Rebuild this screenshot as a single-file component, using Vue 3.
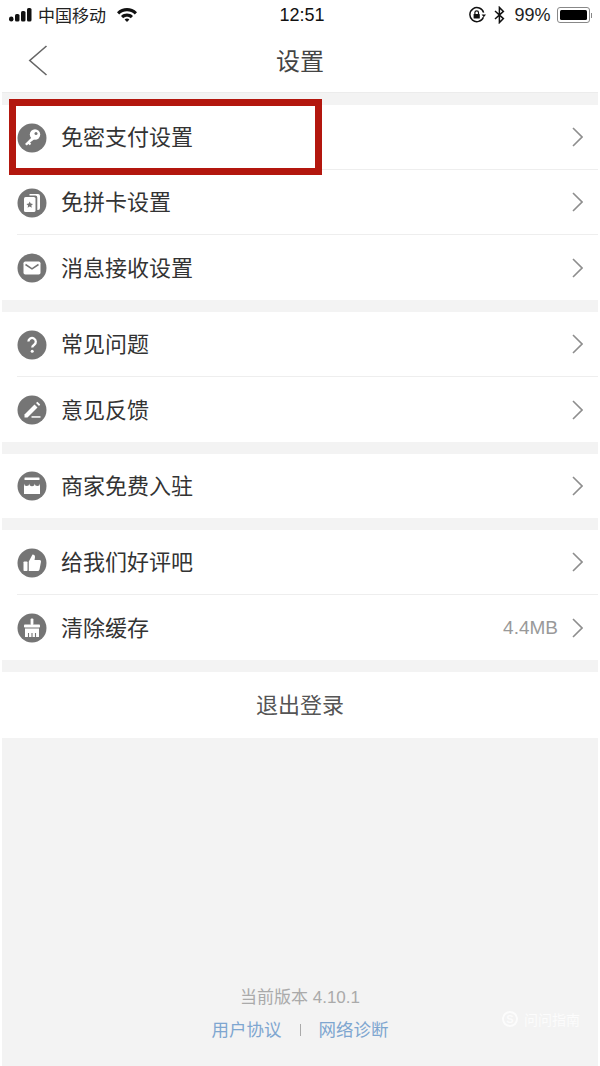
<template>
  <div class="page">
    <div class="status">
      <div class="status-left">
        <svg class="signal" width="24" height="14" viewBox="0 0 24 14">
          <rect x="0" y="8.500" width="4.500" height="5" rx="2.200" fill="#111" />
          <rect x="6" y="6" width="4.500" height="7.500" rx="1.600" fill="#111" />
          <rect x="12" y="3" width="4.500" height="10.500" rx="1.600" fill="#111" />
          <rect x="18" y="0" width="4.500" height="13.500" rx="1.600" fill="#111" />
        </svg>
        <span class="carrier">中国移动</span>
        <svg class="wifi" width="22" height="15" viewBox="0 0 22 15">
          <path d="M1 5.200C6.600 -0.400 15.400 -0.400 21 5.200L18.800 7.400C14.400 3.200 7.600 3.200 3.200 7.400Z" fill="#111" />
          <path d="M5 9C8.400 5.800 13.600 5.800 17 9L14.800 11.200C12.600 9.200 9.400 9.200 7.200 11.200Z" fill="#111" />
          <path d="M8.600 12.400C10 11.200 12 11.200 13.400 12.400L11 15Z" fill="#111" />
        </svg>
      </div>
      <div class="time">12:51</div>
      <div class="status-right">
        <svg width="18" height="18" viewBox="0 0 18 18" class="lock">
          <path d="M15.400 11.200A7 7 0 1 1 15.600 6.600" fill="none" stroke="#111" stroke-width="1.500" />
          <path d="M13.600 8.400H18L15.800 11.200Z" fill="#111" />
          <rect x="5.600" y="8" width="6.200" height="4.600" rx="0.600" fill="#111" />
          <path d="M6.900 8V6.600a1.800 1.800 0 0 1 3.600 0V8" fill="none" stroke="#111" stroke-width="1.200" />
        </svg>
        <svg width="11" height="18" viewBox="0 0 11 18" class="bt">
          <path d="M1 5L9.400 12.600L5.400 16.600V1.400L9.400 5.400L1 13" fill="none" stroke="#111" stroke-width="1.500" />
        </svg>
        <span class="battery-text">99%</span>
        <div class="battery"><div class="battery-fill"></div></div>
        <div class="battery-tip"></div>
      </div>
    </div>

    <div class="nav">
      <svg class="back" width="20" height="32" viewBox="0 0 20 32">
        <path d="M18.500 2L1.800 16.500L18.500 31" fill="none" stroke="#666" stroke-width="1.600" />
      </svg>
      <div class="title">设置</div>
    </div>

    <div class="content">
      <div v-for="(group, i) in groups" :key="i" class="group">
        <div v-for="item in group" :key="item.label" class="row">
          <svg class="icon" width="30" height="30" viewBox="0 0 30 30">
            <circle cx="15" cy="15" r="14.500" fill="#757575" />
            <g v-if="item.icon === 'key'">
              <circle cx="18" cy="11.500" r="5.200" fill="#fff" />
              <circle cx="19" cy="10.500" r="1.500" fill="#757575" />
              <path d="M15 14L8 21l1.800 1.600 1.600-1.600 1.400 1.200 1.400-1.400-1.200-1.200L17 16.500Z" fill="#fff" />
            </g>
            <g v-if="item.icon === 'card'">
              <path d="M12.500 6h8.500a2 2 0 0 1 2 2v12a2 2 0 0 1-2 2h-.700V9.500a2 2 0 0 0-2-2h-5.800Z" fill="#fff" />
              <rect x="7" y="9" width="11.500" height="15" rx="1.600" fill="#fff" />
              <path d="M12.700 13.400l1 2.200 2.300.3-1.700 1.600.5 2.300-2.100-1.200-2.100 1.200.5-2.300-1.700-1.600 2.300-.3Z" fill="#757575" />
            </g>
            <g v-if="item.icon === 'mail'">
              <rect x="6.500" y="8.500" width="17" height="13" rx="1.800" fill="#fff" />
              <path d="M8.500 11.500L15 15.800L21.500 11.500" fill="none" stroke="#757575" stroke-width="1.500" />
            </g>
            <g v-if="item.icon === 'help'">
              <path d="M11.400 11.600a3.700 3.700 0 1 1 5.800 3.100c-1.300.9-2 1.500-2 2.900" fill="none" stroke="#fff" stroke-width="2.300" />
              <circle cx="15.200" cy="21.300" r="1.500" fill="#fff" />
            </g>
            <g v-if="item.icon === 'pen'">
              <path d="M7.500 19.500L17.500 9.500L20.500 12.500L10.500 22.500H7.500Z" fill="#fff" />
              <path d="M19 8L20.400 6.800L23.200 9.600L22 11Z" fill="#fff" />
              <rect x="14.500" y="21.200" width="9" height="1.500" fill="#fff" />
            </g>
            <g v-if="item.icon === 'shop'">
              <rect x="7.500" y="6.500" width="15" height="2.600" rx="0.500" fill="#fff" />
              <path d="M7 12.500a2.670 2.670 0 0 0 5.330 0a2.670 2.670 0 0 0 5.340 0a2.670 2.670 0 0 0 5.330 0V23H7Z" fill="#fff" />
            </g>
            <g v-if="item.icon === 'thumb'">
              <rect x="6.500" y="13.500" width="4" height="9.500" rx="0.800" fill="#fff" />
              <path d="M11.800 13.500L15.500 6.500c1.800 0 2.700 1.200 2.500 2.800L17.500 12H22.500a1.500 1.500 0 0 1 1.500 1.800L22.500 21.500a2 2 0 0 1-2 1.500H11.800Z" fill="#fff" />
            </g>
            <g v-if="item.icon === 'brush'">
              <rect x="13.600" y="5.500" width="2.800" height="6.500" rx="1" fill="#fff" />
              <rect x="7" y="11.500" width="16" height="3" rx="0.800" fill="#fff" />
              <path d="M8 15.500H22V24H8Z" fill="#fff" />
              <path d="M11.500 20V24M15 20V24M18.500 20V24" stroke="#757575" stroke-width="1.100" />
            </g>
          </svg>
          <div class="row-main">
            <span class="label">{{ item.label }}</span>
            <span v-if="item.extra" class="extra">{{ item.extra }}</span>
            <svg class="chevron" width="11" height="20" viewBox="0 0 11 20">
              <path d="M1 1L10 10L1 19" fill="none" stroke="#8e8e8e" stroke-width="1.600" />
            </svg>
          </div>
        </div>
      </div>
      <div class="logout">退出登录</div>
      <div class="footer">
        <div class="version">当前版本 4.10.1</div>
        <div class="links">
          <span>用户协议</span>
          <i class="sep"></i>
          <span>网络诊断</span>
        </div>
      </div>
    </div>

    <div class="highlight"></div>
    <div class="watermark">
      <span class="wm-s">S</span>
      <span>问问指南</span>
    </div>
  </div>
</template>

<script setup>
const groups = [
  [
    { icon: 'key', label: '免密支付设置' },
    { icon: 'card', label: '免拼卡设置' },
    { icon: 'mail', label: '消息接收设置' },
  ],
  [
    { icon: 'help', label: '常见问题' },
    { icon: 'pen', label: '意见反馈' },
  ],
  [{ icon: 'shop', label: '商家免费入驻' }],
  [
    { icon: 'thumb', label: '给我们好评吧' },
    { icon: 'brush', label: '清除缓存', extra: '4.4MB' },
  ],
]
</script>

<style>
html,
body {
  margin: 0;
  background: #fff;
}
</style>

<style scoped>
.page {
  position: relative;
  width: 600px;
  height: 1066px;
  overflow: hidden;
  background: #fff;
  font-family: "Liberation Sans", "Noto Sans CJK SC", sans-serif;
  color: #333;
}

.status {
  height: 30px;
  display: flex;
  align-items: center;
  justify-content: space-between;
  padding: 0 8px 0 9px;
  position: relative;
  color: #111;
}

.status-left {
  display: flex;
  align-items: center;
}

.carrier {
  font-size: 17px;
  margin-left: 5px;
  padding-bottom: 2px;
  color: #222;
}

.wifi {
  margin-left: 10px;
  margin-top: -1px;
}

.time {
  position: absolute;
  left: 4px;
  right: 0;
  text-align: center;
  font-size: 18px;
  color: #111;
}

.status-right {
  display: flex;
  align-items: center;
}

.lock {
  margin-right: 8px;
}

.bt {
  margin-right: 9px;
}

.battery-text {
  font-size: 18px;
  color: #222;
  margin-right: 6px;
}

.battery {
  width: 27px;
  height: 10px;
  border: 1px solid #888;
  border-radius: 3px;
  padding: 2px;
}

.battery-fill {
  height: 100%;
  background: #000;
  border-radius: 1.500px;
}

.battery-tip {
  width: 1.500px;
  height: 5px;
  background: #888;
  margin-left: 1px;
}

.nav {
  height: 62px;
  position: relative;
  display: flex;
  align-items: center;
  justify-content: center;
}

.back {
  position: absolute;
  left: 28px;
  top: 14px;
}

.title {
  font-size: 24px;
  color: #444;
  padding-bottom: 4px;
}

.content {
  margin: 0 2px;
  height: 974px;
  background: #f3f3f3;
  border-top: 1px solid #ececec;
  padding-top: 12px;
  box-sizing: border-box;
  display: flex;
  flex-direction: column;
}

.group {
  background: #fff;
  margin-bottom: 12px;
}

.row {
  height: 65px;
  display: flex;
  align-items: center;
  padding-left: 15px;
  box-sizing: border-box;
}

.group:nth-child(3) .row {
  height: 64px;
}

.icon {
  flex: none;
  position: relative;
  z-index: 1;
}

.row-main {
  flex: 1;
  height: 100%;
  margin-left: -30px;
  padding: 0 15px 0 44px;
  display: flex;
  align-items: center;
  border-bottom: 1px solid #eeeeee;
  box-sizing: border-box;
}

.row:last-child .row-main {
  border-bottom: none;
}

.label {
  flex: 1;
  font-size: 22px;
  color: #333;
  padding-bottom: 4px;
}

.extra {
  font-size: 19px;
  color: #999;
  margin-right: 14px;
}

.logout {
  height: 66px;
  background: #fff;
  display: flex;
  align-items: center;
  justify-content: center;
  font-size: 22px;
  color: #555;
  padding-bottom: 4px;
  box-sizing: border-box;
}

.footer {
  flex: 1;
  display: flex;
  flex-direction: column;
  justify-content: flex-end;
  align-items: center;
  padding-bottom: 24px;
}

.version {
  font-size: 17px;
  color: #aaa;
  line-height: 24px;
  margin-bottom: 8px;
}

.links {
  display: flex;
  align-items: center;
  font-size: 17.500px;
  color: #7ea6d0;
  line-height: 24px;
}

.sep {
  width: 1px;
  height: 12px;
  background: #aaa;
  margin: 0 18px;
}

.highlight {
  position: absolute;
  left: 9px;
  top: 99px;
  width: 313px;
  height: 76px;
  border: 7px solid #b3170e;
  box-sizing: border-box;
}

.watermark {
  position: absolute;
  left: 502px;
  top: 1009px;
  display: flex;
  align-items: center;
  gap: 6px;
  font-size: 14px;
  color: #fff;
  opacity: 0.75;
}

.wm-s {
  width: 12px;
  height: 12px;
  border-radius: 50%;
  border: 2px solid #fff;
  font-size: 11px;
  font-weight: 700;
  text-align: center;
  line-height: 12px;
}
</style>
